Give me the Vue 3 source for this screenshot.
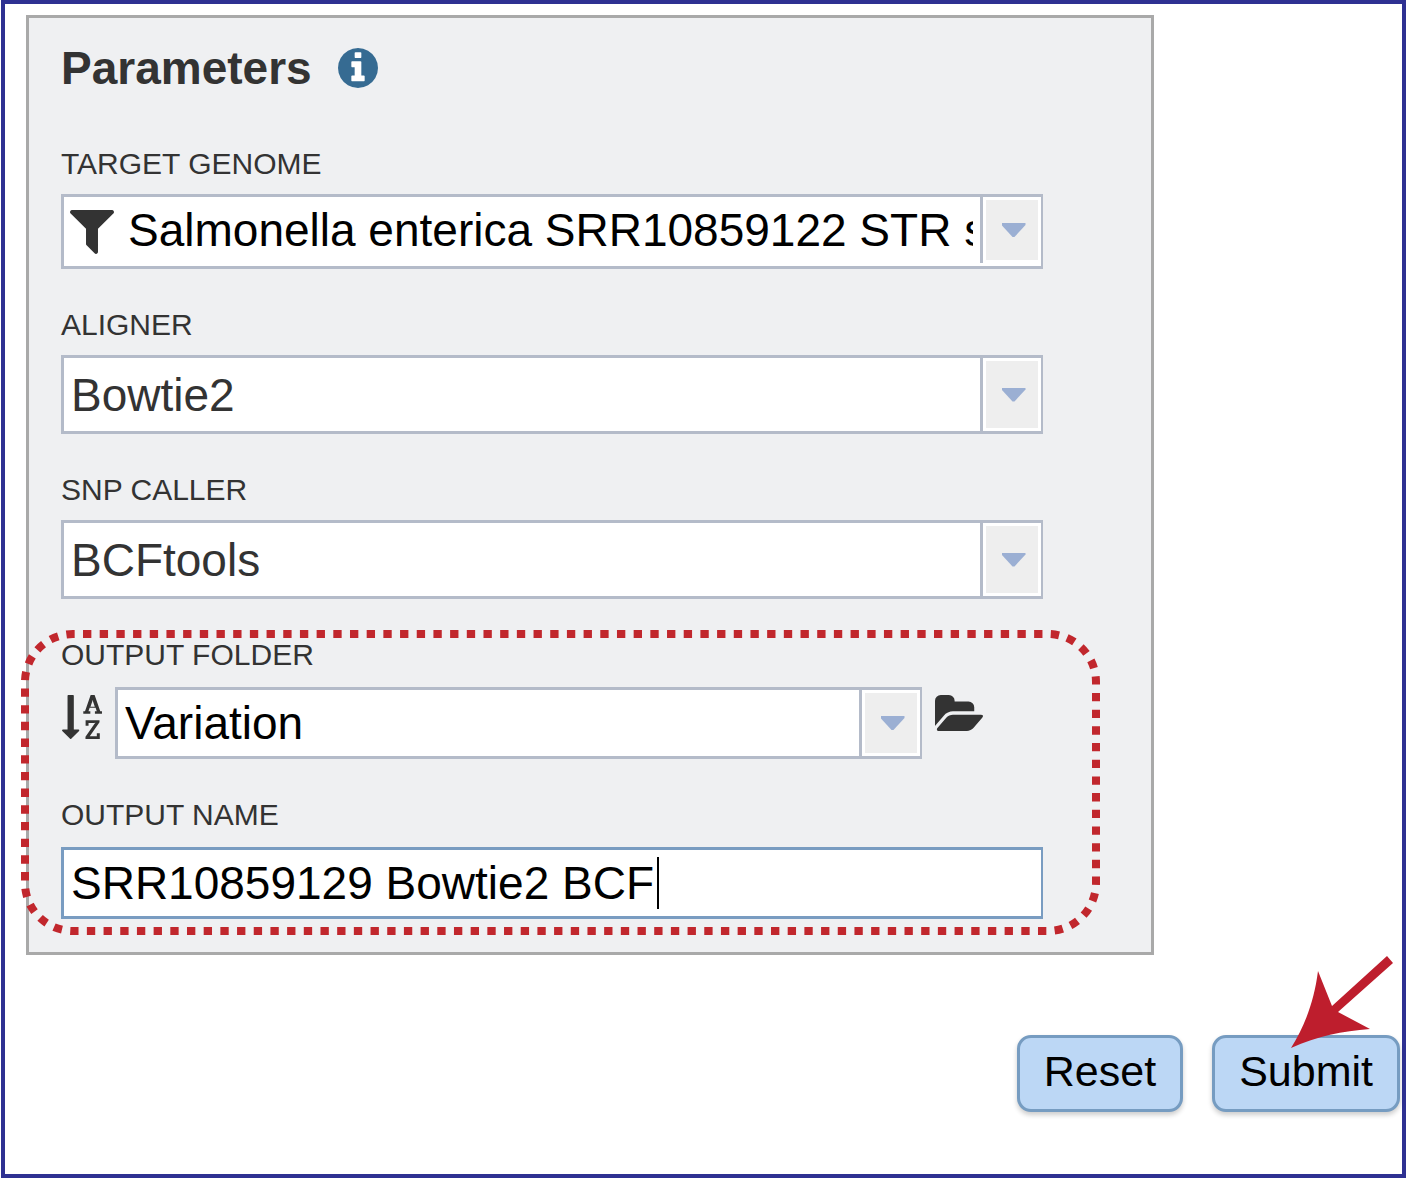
<script setup>
import { ref } from 'vue'

const targetGenome = ref('Salmonella enterica SRR10859122 STR serovar')
const aligner = ref('Bowtie2')
const snpCaller = ref('BCFtools')
const outputFolder = ref('Variation')
const outputName = ref('SRR10859129 Bowtie2 BCF')
</script>

<template>
  <form class="frame" @submit.prevent>
    <section class="panel">
      <header class="heading">
        <h1>Parameters</h1>
        <button type="button" class="icon-button" aria-label="Parameter help">
          <svg class="info" viewBox="128 128 1536 1536" aria-hidden="true">
            <circle cx="896" cy="896" r="760" fill="#fff" />
            <path fill="currentColor" d="M1152 1376v-160q0-14-9-23t-23-9h-96v-512q0-14-9-23t-23-9h-320q-14 0-23 9t-9 23v160q0 14 9 23t23 9h96v320h-96q-14 0-23 9t-9 23v160q0 14 9 23t23 9h448q14 0 23-9t9-23zm-128-896v-160q0-14-9-23t-23-9h-192q-14 0-23 9t-9 23v160q0 14 9 23t23 9h192q14 0 23-9t9-23zm640 416q0 209-103 385.5t-279.5 279.5-385.5 103-385.5-103-279.5-279.5-103-385.5 103-385.5 279.5-279.5 385.5-103 385.5 103 279.5 279.5 103 385.5z" />
          </svg>
        </button>
      </header>

      <div class="fields">
        <div class="field">
          <label for="genome">TARGET GENOME</label>
          <div class="combo genome">
            <svg class="filter" viewBox="190 256 1412 1408" aria-hidden="true">
              <path fill="currentColor" d="M1595 295q17 41-14 70l-493 493v742q0 42-39 59-13 5-25 5-27 0-45-19l-256-256q-19-19-19-45v-486l-493-493q-31-29-14-70 17-39 59-39h1280q42 0 59 39z" />
            </svg>
            <input id="genome" v-model="targetGenome" type="text" />
            <button type="button" class="arrow" aria-label="Show genomes">
              <span class="arrow-face"><span class="triangle"></span></span>
            </button>
          </div>
        </div>

        <div class="field">
          <label for="aligner">ALIGNER</label>
          <div class="combo tall">
            <select id="aligner" v-model="aligner">
              <option>Bowtie2</option>
            </select>
            <span class="arrow over" aria-hidden="true">
              <span class="arrow-face"><span class="triangle"></span></span>
            </span>
          </div>
        </div>

        <div class="field">
          <label for="caller">SNP CALLER</label>
          <div class="combo tall">
            <select id="caller" v-model="snpCaller">
              <option>BCFtools</option>
            </select>
            <span class="arrow over" aria-hidden="true">
              <span class="arrow-face"><span class="triangle"></span></span>
            </span>
          </div>
        </div>

        <div class="output">
          <div class="field">
            <label for="folder">OUTPUT FOLDER</label>
            <div class="folder-row">
              <button type="button" class="icon-button sort-button" aria-label="Sort folders">
                <svg class="sort" viewBox="30 -32 1632 1792" aria-hidden="true">
                  <path fill="currentColor" d="M1191 448h177l-72-218-12-47q-2-16-2-20h-4l-3 20q0 1-3.5 18t-7.5 29zm-455 960q0 12-10 24l-319 319q-10 9-23 9-12 0-23-9l-320-320q-15-16-7-35 8-20 30-20h192v-1376q0-14 9-23t23-9h192q14 0 23 9t9 23v1376h192q14 0 23 9t9 23zm836 119v233h-584v-90l369-529q12-18 21-27l11-9v-3q-2 0-6.5.5t-7.5.5q-12 3-30 3h-232v115h-120v-229h567v89l-369 530q-6 8-21 26l-11 11v2l14-2q9-2 30-2h248v-119h121zm89-898v106h-288v-106h75l-47-144h-243l-47 144h75v106h-287v-106h70l230-662h162l230 662h70z" />
                </svg>
              </button>
              <div class="combo">
                <input id="folder" v-model="outputFolder" type="text" />
                <button type="button" class="arrow" aria-label="Show folders">
                  <span class="arrow-face"><span class="triangle"></span></span>
                </button>
              </div>
              <button type="button" class="icon-button browse-button" aria-label="Browse folders">
                <svg class="folder" viewBox="0 128 1879 1408" aria-hidden="true">
                  <path fill="currentColor" d="M1879 952q0 31-31 66l-336 396q-43 51-120.5 86.5t-143.5 35.5h-1088q-34 0-60.5-13t-26.5-43q0-31 31-66l336-396q43-51 120.5-86.5t143.5-35.5h1088q34 0 60.5 13t26.5 43zm-343-344v160h-832q-94 0-197 47.5t-164 119.5l-337 396-5 6q0-4-.5-12.5t-.5-12.5v-960q0-92 66-158t158-66h320q92 0 158 66t66 158v32h544q92 0 158 66t66 158z" />
                </svg>
              </button>
            </div>
          </div>

          <div class="field">
            <label for="name">OUTPUT NAME</label>
            <div class="combo active">
              <input id="name" v-model="outputName" type="text" />
              <span class="caret" aria-hidden="true"></span>
            </div>
          </div>

          <svg class="highlight" aria-hidden="true">
            <rect width="100%" height="100%" rx="48" pathLength="318" />
          </svg>
        </div>
      </div>
    </section>

    <footer class="actions">
      <button type="reset" class="action">Reset</button>
      <button type="submit" class="action">Submit</button>
      <svg class="pointer" viewBox="0 0 104 93" aria-hidden="true">
        <path d="M0 92C13 71 23 47 27 15L41 50L96 0L102 7L47 56L79 73C51 75 27 80 0 92Z" />
      </svg>
    </footer>
  </form>
</template>

<style>
body {
  margin: 0;
  background: #fff;
}
</style>

<style scoped>
.frame,
.frame * {
  box-sizing: border-box;
}

.frame {
  margin: 0 10px 0 1px;
  padding-top: 11px;
  border: 4px solid #2e3192;
  background: #fff;
  color: #333;
  font-family: "Liberation Sans", Arial, sans-serif;
}

.panel {
  margin: 0 248px 0 21px;
  padding: 24px 108px 33px 32px;
  border: 3px solid #a9a9a9;
  background: #eff0f2;
}

.heading {
  display: flex;
  align-items: center;
  gap: 26px;
  margin-bottom: 50px;
}

h1 {
  margin: 0;
  font-size: 46px;
  line-height: 52px;
  font-weight: 700;
}

.icon-button {
  display: block;
  flex: none;
  padding: 0;
  border: 0;
  background: none;
  color: #333;
}

.icon-button svg {
  display: block;
}

.info {
  width: 40px;
  height: 40px;
  color: #366b92;
}

.fields,
.output {
  display: flex;
  flex-direction: column;
  gap: 36px;
}

.output {
  position: relative;
}

.field {
  display: flex;
  flex-direction: column;
  gap: 10px;
}

.output .field {
  gap: 12px;
}

label {
  font-size: 30px;
  line-height: 40px;
}

.combo {
  position: relative;
  display: flex;
  flex: 1;
  min-width: 0;
  min-height: 72px;
  border: 3px solid #b4bbc9;
  border-right-width: 2px;
  background: #fff;
}

.genome {
  min-height: 75px;
  padding-bottom: 3px;
}

.tall {
  min-height: 79px;
}

.active {
  border-color: #799cc1;
}

.combo input,
.combo select {
  flex: 1;
  min-width: 0;
  width: 0;
  margin: 0;
  padding: 0 7px;
  border: 0;
  border-radius: 0;
  outline: 0;
  background: transparent;
  color: #000;
  font-family: inherit;
  font-size: 46px;
}

.combo select {
  appearance: none;
  color: #333;
}

.filter {
  flex: none;
  align-self: center;
  width: 44px;
  height: 44px;
  margin: 4px 7px 0 6px;
}

.arrow {
  flex: none;
  display: flex;
  width: 61px;
  padding: 3px;
  border: 0;
  border-left: 3px solid #b4bbc9;
  background: #fff;
}

.over {
  position: absolute;
  top: 0;
  right: 0;
  bottom: 0;
  pointer-events: none;
}

.arrow-face {
  flex: 1;
  align-self: stretch;
  display: flex;
  align-items: center;
  justify-content: center;
  padding-left: 3px;
  background: #eee;
}

.triangle {
  width: 24px;
  height: 14px;
  background: #9bafd3;
  clip-path: polygon(0 0, 100% 0, 100% 15%, 54% 100%, 46% 100%, 0 15%);
}

.folder-row {
  display: flex;
  align-items: flex-start;
  padding-right: 60px;
}

.sort-button {
  padding: 8px 13px 0 1px;
}

.sort {
  width: 40px;
  height: 44px;
}

.browse-button {
  padding: 8px 0 0 13px;
}

.folder {
  width: 48px;
  height: 36px;
}

.caret {
  position: absolute;
  top: 7px;
  left: 593px;
  width: 2px;
  height: 52px;
  background: #000;
}

.highlight {
  position: absolute;
  top: -1px;
  left: -36px;
  width: calc(100% + 89px);
  height: calc(100% + 13px);
  overflow: visible;
  pointer-events: none;
}

.highlight rect {
  fill: none;
  stroke: #c1272d;
  stroke-width: 8px;
  stroke-dasharray: 1 1;
  stroke-dashoffset: 0.8;
}

.actions {
  position: relative;
  display: flex;
  justify-content: flex-end;
  gap: 29px;
  padding: 80px 2px 62px;
}

.action {
  height: 77px;
  padding: 0 24px 4px;
  border: 3px solid #769cc1;
  border-radius: 14px;
  background: #bcd7f5;
  box-shadow: 0 3px 5px rgba(0, 0, 0, 0.2);
  color: #000;
  font-family: inherit;
  font-size: 43px;
}

.pointer {
  position: absolute;
  top: 1px;
  right: 7px;
  width: 104px;
  height: 93px;
  fill: #be1e2d;
  pointer-events: none;
}
</style>
